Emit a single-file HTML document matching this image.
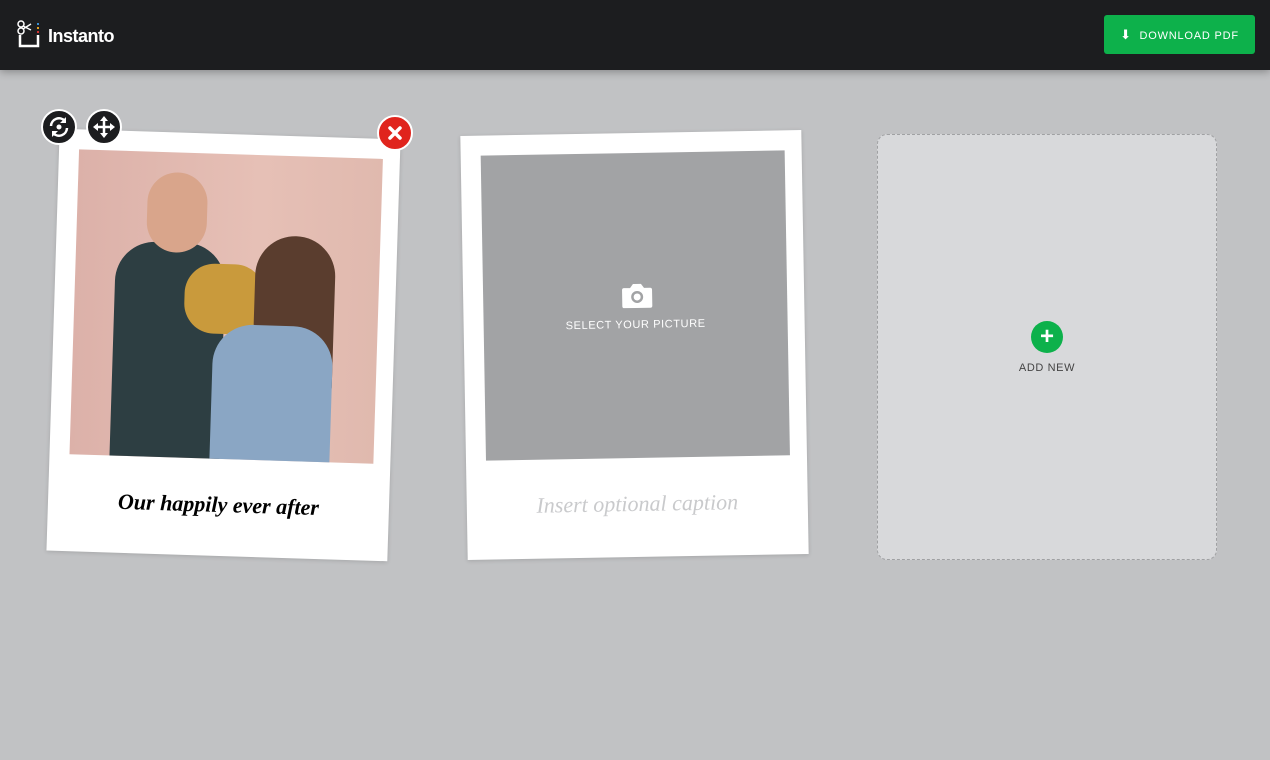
<!DOCTYPE html>
<html><head><meta charset="utf-8"><style>
body{margin:0;width:1270px;height:760px;background:#c1c2c4;font-family:"Liberation Sans",sans-serif;overflow:hidden;position:relative}
.top{position:absolute;left:0;top:0;width:1270px;height:70px;background:#1c1d1f;box-shadow:0 2px 8px rgba(0,0,0,.3)}
.logo{position:absolute;left:48px;top:26px;color:#fff;font-weight:bold;font-size:18px;letter-spacing:-0.5px}
.btn{position:absolute;left:1104px;top:15px;width:151px;height:39px;background:#0db14b;border-radius:3px;color:#fff;font-size:11px;letter-spacing:.8px;line-height:39px;text-align:center}
.card{position:absolute;background:#fff;box-shadow:0 1px 4px rgba(0,0,0,.15)}
.c1{left:53px;top:134px;width:341px;height:422px;transform:rotate(1.8deg)}
.c2{left:464px;top:133px;width:341px;height:424px;transform:rotate(-1deg)}
.ph{position:absolute;left:20px;top:20px;width:304px;height:305px}
.cap{position:absolute;left:0;right:0;top:358px;text-align:center;font-family:"Liberation Serif",serif;font-style:italic;font-size:22px}
.add{position:absolute;left:877px;top:134px;width:338px;height:424px;border:1px dashed #a0a1a3;border-radius:10px;background:#d8d9db}
.circ{position:absolute;width:32px;height:32px;border-radius:50%;border:2px solid #fff;background:#1c1d1f}
</style></head><body>
<div class="top">
<svg style="position:absolute;left:17px;top:20px" width="26" height="28" viewBox="0 0 26 28"><circle cx="4" cy="4" r="3" fill="none" stroke="#fff" stroke-width="1.5"/><circle cx="4" cy="11" r="3" fill="none" stroke="#fff" stroke-width="1.5"/><path d="M6 6L14 10M6 9L14 4" stroke="#fff" stroke-width="1.5"/><rect x="20" y="3" width="2" height="2" fill="#3a8fd0"/><rect x="20" y="7" width="2" height="2" fill="#e0a020"/><rect x="20" y="11" width="2" height="2" fill="#d03030"/><path d="M3 15V26H21V15" fill="none" stroke="#fff" stroke-width="2.5"/></svg>
<div class="logo">Instanto</div>
<div class="btn"><span style="font-size:13px">&#11015;</span>&nbsp; DOWNLOAD PDF</div>
</div>
<div class="card c1">
<div class="ph" style="background:linear-gradient(90deg,#dcb1a9,#e6c0b6 60%,#e0b9ae)">
<div style="position:absolute;left:40px;top:90px;width:110px;height:215px;background:#2d3e42;border-radius:40px 40px 0 0"></div>
<div style="position:absolute;left:70px;top:20px;width:60px;height:80px;background:#d9a58b;border-radius:30px"></div>
<div style="position:absolute;left:110px;top:110px;width:80px;height:70px;background:#c99a3c;border-radius:30px"></div>
<div style="position:absolute;left:180px;top:80px;width:80px;height:160px;background:#5a3d2e;border-radius:40px 40px 10px 10px"></div>
<div style="position:absolute;left:140px;top:170px;width:120px;height:135px;background:#8aa6c4;border-radius:40px 40px 0 0"></div>
</div>
<div class="cap" style="font-weight:bold">Our happily ever after</div>
</div>
<div class="card c2">
<div class="ph" style="background:#a2a3a5">
<svg style="position:absolute;left:138px;top:130px" width="32" height="26" viewBox="0 0 32 26"><path d="M3 5h6l3-4h8l3 4h6a2 2 0 0 1 2 2v16a2 2 0 0 1-2 2H3a2 2 0 0 1-2-2V7a2 2 0 0 1 2-2z" fill="#fff"/><circle cx="16" cy="14" r="6" fill="#a2a3a5"/><circle cx="16" cy="14" r="3.5" fill="#fff"/></svg>
<div style="position:absolute;left:0;right:0;top:166px;text-align:center;color:#fff;font-size:11px;letter-spacing:.6px">SELECT YOUR PICTURE</div>
</div>
<div class="cap" style="color:#c9cacc">Insert optional caption</div>
</div>
<div class="add">
<div style="position:absolute;left:153px;top:186px;width:32px;height:32px;border-radius:50%;background:#0db14b;color:#fff;font-size:24px;line-height:32px;text-align:center;font-weight:bold">+</div>
<div style="position:absolute;left:0;right:0;top:227px;text-align:center;color:#444;font-size:11px;letter-spacing:.6px">ADD NEW</div>
</div>
<div class="circ" style="left:41px;top:109px"><svg width="32" height="32" viewBox="0 0 32 32"><path d="M8 15a8 8 0 0 1 14-5M24 17a8 8 0 0 1-14 5" fill="none" stroke="#fff" stroke-width="2.5"/><path d="M23 6v6h-6zM9 26v-6h6z" fill="#fff"/><circle cx="16" cy="16" r="2.5" fill="#fff"/></svg></div>
<div class="circ" style="left:86px;top:109px"><svg width="32" height="32" viewBox="0 0 32 32"><path d="M16 5l4 5h-8zM16 27l4-5h-8zM5 16l5-4v8zM27 16l-5-4v8z" fill="#fff"/><path d="M16 9v14M9 16h14" stroke="#fff" stroke-width="2.5"/></svg></div>
<div class="circ" style="left:377px;top:115px;background:#e0241d"><svg width="32" height="32" viewBox="0 0 32 32"><path d="M11 11l10 10M21 11l-10 10" stroke="#fff" stroke-width="3.5" stroke-linecap="round"/></svg></div>
</body></html>
